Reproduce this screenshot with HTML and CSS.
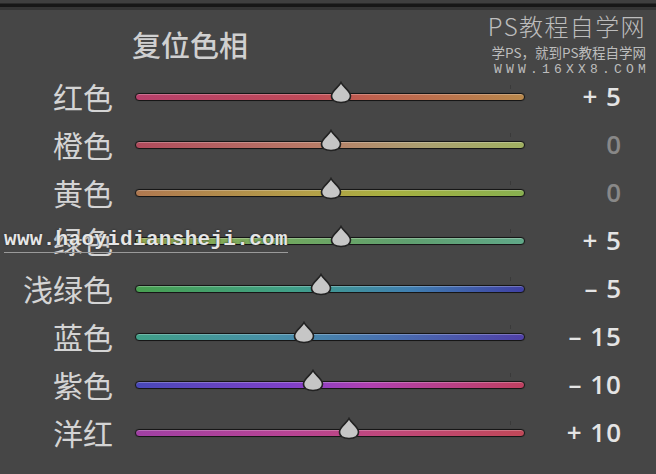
FILE: index.html
```html
<!DOCTYPE html>
<html lang="zh-CN">
<head>
    <meta charset="UTF-8">
    <meta name="viewport" content="width=device-width, initial-scale=1.0">
    <title>色相 HSL 面板</title>
    <link rel="stylesheet" href="styles.css">
</head>
<body>
    <div class="topbar"></div>
    <div class="panel">
        <div class="header">
            <h1 class="title">复位色相</h1>
            <div class="brand">
                <div class="brand-name">PS教程自学网</div>
                <div class="brand-slogan">学PS，就到PS教程自学网</div>
                <div class="brand-url">WWW.16XX8.COM</div>
            </div>
        </div>

        <div class="rows">
            <div class="row">
                <span class="label">红色</span>
                <div class="track red"><span class="thumb" style="left: 52.8%"></span></div>
                <span class="value">+ 5</span>
            </div>
            <div class="row">
                <span class="label">橙色</span>
                <div class="track orange"><span class="thumb" style="left: 50.3%"></span></div>
                <span class="value zero">0</span>
            </div>
            <div class="row">
                <span class="label">黄色</span>
                <div class="track yellow"><span class="thumb" style="left: 50.3%"></span></div>
                <span class="value zero">0</span>
            </div>
            <div class="row">
                <span class="label">绿色</span>
                <div class="track green"><span class="thumb" style="left: 52.8%"></span></div>
                <span class="value">+ 5</span>
            </div>
            <div class="row">
                <span class="label">浅绿色</span>
                <div class="track aqua"><span class="thumb" style="left: 47.7%"></span></div>
                <span class="value">– 5</span>
            </div>
            <div class="row">
                <span class="label">蓝色</span>
                <div class="track blue"><span class="thumb" style="left: 43.4%"></span></div>
                <span class="value">– 15</span>
            </div>
            <div class="row">
                <span class="label">紫色</span>
                <div class="track purple"><span class="thumb" style="left: 45.7%"></span></div>
                <span class="value">– 10</span>
            </div>
            <div class="row">
                <span class="label">洋红</span>
                <div class="track magenta"><span class="thumb" style="left: 54.9%"></span></div>
                <span class="value">+ 10</span>
            </div>
        </div>

        <div class="stamp">www.haoyidiansheji.com</div>
    </div>
</body>
</html>
```

FILE: styles.css
```css
html, body {
    margin: 0;
    padding: 0;
}

body {
    width: 656px;
    height: 474px;
    overflow: hidden;
    background-color: #464646;
    font-family: "Noto Sans CJK SC", "Noto Sans", sans-serif;
    color: #d2d2d2;
}

.topbar {
    height: 10px;
    background: linear-gradient(to bottom,
        #3f3f3f 0, #3f3f3f 3px,
        #2a2a2a 3px, #2a2a2a 4px,
        #171717 4px, #171717 7px,
        #353535 7px, #353535 10px);
}

.panel {
    position: relative;
}

.header {
    height: 62px;
    display: flex;
    justify-content: space-between;
}

.title {
    margin: 16px 0 0 132px;
    font-size: 29px;
    font-weight: 500;
    line-height: 36px;
    color: #d0d0d0;
}

.brand {
    margin-right: 10px;
    color: #bdbdbd;
    text-align: right;
}

.brand-name {
    font-size: 24px;
    line-height: 28px;
    font-weight: 300;
    letter-spacing: 1.4px;
    margin-top: 2px;
}

.brand-slogan {
    font-size: 13.5px;
    line-height: 15px;
    margin-top: 5px;
}

.brand-url {
    font-family: "Liberation Mono", monospace;
    font-size: 13px;
    line-height: 14px;
    letter-spacing: 4.2px;
    margin-top: 3px;
    margin-right: -4px;
}

.rows {
    display: flex;
    flex-direction: column;
}

.row {
    height: 48px;
    display: grid;
    grid-template-columns: 112px 413px 97px;
    align-items: center;
}

.label {
    font-size: 30px;
    line-height: 36px;
    text-align: right;
    color: #d4d4d4;
    margin-right: -1px;
}

.track {
    position: relative;
    margin-left: 23px;
    height: 6px;
    border: 1.5px solid #161616;
    border-radius: 5px;
    box-shadow: inset 0 1px 0 rgba(255, 255, 255, 0.25), 0 0 1px rgba(0, 0, 0, 0.4);
    margin-top: 2px;
}

.track::after {
    content: "";
    position: absolute;
    left: 96.5%;
    top: -9px;
    width: 1px;
    height: 4px;
    background-color: #3a3a3a;
}

.track.red     { background: linear-gradient(to right, #b8406c, #c04a58 45%, #c0604e 60%, #b8884c); }
.track.orange  { background: linear-gradient(to right, #b04a5c, #b87a66 45%, #aaa070 75%, #a0b060); }
.track.yellow  { background: linear-gradient(to right, #b07850, #b4a048 45%, #a8b040 65%, #88b050); }
.track.green   { background: linear-gradient(to right, #98ac50, #70a860 40%, #60a070 70%, #60a888); }
.track.aqua    { background: linear-gradient(to right, #48a050, #40a088 40%, #4080b0 70%, #4040a4); }
.track.blue    { background: linear-gradient(to right, #40a088, #4890a8 35%, #4870b0 65%, #5040a8); }
.track.purple  { background: linear-gradient(to right, #4848b8, #8040c8 40%, #b040b0 60%, #c04060); }
.track.magenta { background: linear-gradient(to right, #a040a4, #b84494 40%, #c0487a 65%, #c04858); }

.thumb {
    position: absolute;
    top: -13px;
    width: 22px;
    height: 23px;
    margin-left: -11px;
    background: url("data:image/svg+xml;utf8,<svg xmlns='http://www.w3.org/2000/svg' width='22' height='23' viewBox='0 0 22 23'><path d='M11 1.5 C13 6 20.5 10 20.5 15 C20.5 19.5 16.5 21.5 11 21.5 C5.5 21.5 1.5 19.5 1.5 15 C1.5 10 9 6 11 1.5 Z' fill='%23c6c6c6' stroke='%23222' stroke-width='1.6'/></svg>") no-repeat;
}

.value {
    font-family: "Open Sans", "Liberation Sans", sans-serif;
    font-size: 26px;
    font-weight: 600;
    line-height: 30px;
    text-align: right;
    color: #e4e4e4;
    letter-spacing: 1px;
    white-space: pre;
}

.value.zero {
    color: #888888;
}

.stamp {
    position: absolute;
    left: 4px;
    top: 218px;
    font-family: "Liberation Mono", monospace;
    font-size: 21px;
    font-weight: bold;
    line-height: 24px;
    color: #e6e6e6;
    letter-spacing: 0.3px;
    text-shadow: 0 0 2px #222;
    border-bottom: 1px solid #9a9a9a;
}
```
